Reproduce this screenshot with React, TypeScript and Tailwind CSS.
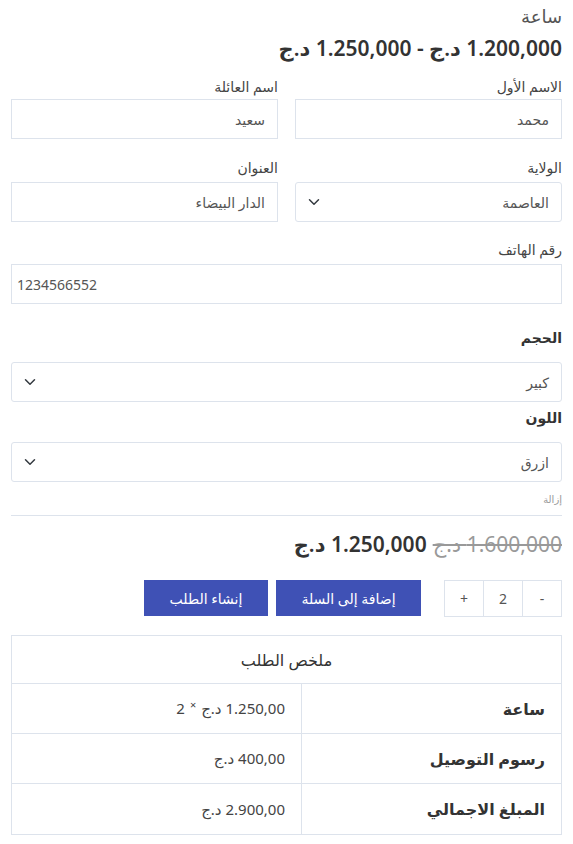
import React from "react";

const Chevron = () => (
  <svg width="12" height="12" viewBox="0 0 16 16" fill="none" stroke="#343a40" strokeWidth="2" strokeLinecap="round" strokeLinejoin="round">
    <path d="M2 5l6 6 6-6" />
  </svg>
);

function Label({ text }: { text: string }) {
  return <label className="block text-[14px] text-[#444] leading-[20px] h-[20px]">{text}</label>;
}

function Input({ value }: { value: string }) {
  return <div className="h-[40px] border border-[#dde3ec] flex items-center px-[12px] text-[14px] text-[#555]">{value}</div>;
}

function SelectBox({ value }: { value: string }) {
  return (
    <div className="h-[40px] border border-[#dde3ec] rounded-[3px] flex items-center justify-between px-[12px] text-[14px] text-[#555]">
      <span>{value}</span>
      <Chevron />
    </div>
  );
}

export default function App() {
  return (
    <div dir="rtl" className="w-[573px] bg-white px-[11px] text-[#333]" style={{ fontFamily: '"Noto Sans", "DejaVu Sans", sans-serif' }}>
      <div className="pt-[2px] h-[29px] text-[18px] leading-[28px] text-[#555]">ساعة</div>
      <div className="mt-[4px] h-[30px] text-[21px] font-semibold leading-[30px] text-[#333]">
        1.200,000 د.ج - 1.250,000 د.ج
      </div>

      <div className="mt-[14px] grid grid-cols-2 gap-x-[17px]">
        <div>
          <Label text="الاسم الأول" />
          <div className="mt-[2px]"><Input value="محمد" /></div>
        </div>
        <div>
          <Label text="اسم العائلة" />
          <div className="mt-[2px]"><Input value="سعيد" /></div>
        </div>
      </div>
      <div className="mt-[19px] grid grid-cols-2 gap-x-[17px]">
        <div>
          <Label text="الولاية" />
          <div className="mt-[4px]"><SelectBox value="العاصمة" /></div>
        </div>
        <div>
          <Label text="العنوان" />
          <div className="mt-[4px]"><Input value="الدار البيضاء" /></div>
        </div>
      </div>
      <div className="mt-[18px]">
        <Label text="رقم الهاتف" />
        <div dir="ltr" className="mt-[4px] h-[40px] border border-[#dde3ec] flex items-center px-[5px] text-[14px] text-[#555]">1234566552</div>
      </div>

      <div className="mt-[24px] h-[20px] text-[14px] font-bold leading-[20px] text-[#333]">الحجم</div>
      <div className="mt-[14px]"><SelectBox value="كبير" /></div>
      <div className="mt-[6px] h-[20px] text-[14px] font-bold leading-[20px] text-[#333]">اللون</div>
      <div className="mt-[14px]"><SelectBox value="ازرق" /></div>
      <div className="mt-[10px] h-[14px] text-[10px] leading-[14px] text-[#999]">إزالة</div>
      <div className="mt-[9px] border-t border-[#dde3ec]"></div>

      <div className="mt-[13px] h-[30px] flex items-center gap-[6px] text-[21px] leading-[30px]">
        <span className="line-through text-[#999]">1.600,000 د.ج</span>
        <span className="font-semibold text-[#333]">1.250,000 د.ج</span>
      </div>

      <div className="mt-[21px] flex items-start gap-[23px]">
        <div className="flex h-[37px] border border-[#dde3ec] text-[14px] text-[#555]">
          <div className="w-[38px] flex items-center justify-center">-</div>
          <div className="w-[40px] flex items-center justify-center border-x border-[#dde3ec]">2</div>
          <div className="w-[38px] flex items-center justify-center">+</div>
        </div>
        <div className="flex gap-[8px]">
          <button className="h-[36px] w-[145px] bg-[#3f51b5] text-white text-[14px]">إضافة إلى السلة</button>
          <button className="h-[36px] w-[124px] bg-[#3f51b5] text-white text-[14px]">إنشاء الطلب</button>
        </div>
      </div>

      <div className="mt-[18px] border border-[#dde3ec] text-[16px]">
        <div className="h-[48px] flex items-center justify-center border-b border-[#dde3ec] text-[#333]">ملخص الطلب</div>
        <div className="grid grid-cols-[260px_1fr] h-[50px] border-b border-[#dde3ec]">
          <div className="flex items-center px-[16px] font-semibold text-[#333] border-l border-[#dde3ec]">ساعة</div>
          <div className="flex items-center px-[16px] text-[15px] text-[#444]">
            <span>1.250,00 د.ج</span>
            <span className="mx-[5px] text-[11px] -translate-y-[3px]">×</span>
            <span>2</span>
          </div>
        </div>
        <div className="grid grid-cols-[260px_1fr] h-[50px] border-b border-[#dde3ec]">
          <div className="flex items-center px-[16px] font-semibold text-[#333] border-l border-[#dde3ec]">رسوم التوصيل</div>
          <div className="flex items-center px-[16px] text-[15px] text-[#444]">400,00 د.ج</div>
        </div>
        <div className="grid grid-cols-[260px_1fr] h-[50px]">
          <div className="flex items-center px-[16px] font-semibold text-[#333] border-l border-[#dde3ec]">المبلغ الاجمالي</div>
          <div className="flex items-center px-[16px] text-[15px] text-[#444]">2.900,00 د.ج</div>
        </div>
      </div>
      <div className="h-[10px]"></div>
    </div>
  );
}
